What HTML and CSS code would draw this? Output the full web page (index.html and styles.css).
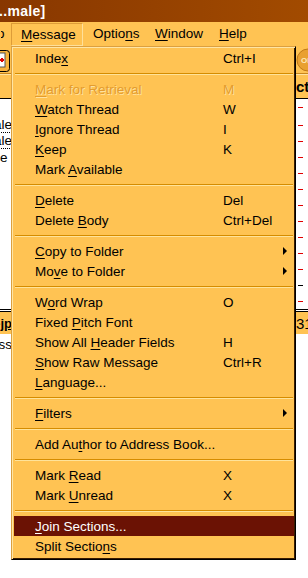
FILE: index.html
```html
<!DOCTYPE html>
<html lang="en">
<head>
    <meta charset="UTF-8">
    <meta name="viewport" content="width=device-width, initial-scale=1.0">
    <title>Message menu</title>
    <link rel="stylesheet" href="styles.css">
</head>
<body>
    <div class="window">
        <div class="titlebar"><span class="title">..male]</span></div>

        <div class="menubar">
            <span class="menu-title cut"><span>o</span></span>
            <span class="menu-title open w-msg"><u>M</u>essage</span>
            <span class="menu-title w-opt">Optio<u>n</u>s</span>
            <span class="menu-title w-win"><u>W</u>indow</span>
            <span class="menu-title"><u>H</u>elp</span>
        </div>

        <div class="toolbar">
            <div class="tool tool-left">
                <svg width="24" height="24" viewBox="0 0 24 24">
                    <rect x="0.5" y="2.5" width="23" height="21" rx="3" fill="#f6b23c" stroke="#000"/>
                    <rect x="3" y="5" width="16" height="14" fill="#fff" stroke="#555"/>
                    <path d="M14 12h4M16 10v4" stroke="#e00000" stroke-width="2"/>
                </svg>
            </div>
            <div class="tool tool-right">
                <svg width="24" height="24" viewBox="0 0 24 24">
                    <circle cx="12" cy="12" r="11" fill="#e9a030" stroke="#c07818"/>
                    <text x="5" y="15" font-family="Liberation Sans, sans-serif" font-size="8" font-weight="bold" fill="#ffe9b8">OP</text>
                </svg>
            </div>
        </div>

        <div class="pane upper">
            <div class="pane-head">
                <span class="head-left"></span>
                <span class="head-right">ct</span>
            </div>
            <div class="rows">
                <div class="row"><span class="cell-left"></span><span class="dash"></span></div>
                <div class="row"><span class="cell-left"><span class="from">Female</span></span><span class="dash"></span></div>
                <div class="row"><span class="cell-left"><span class="from">Female</span></span><span class="dash"></span></div>
                <div class="row"><span class="cell-start">e</span><span class="dash"></span></div>
                <div class="row"><span class="cell-left"></span><span class="dash"></span></div>
                <div class="row"><span class="cell-left"></span><span class="dash"></span></div>
                <div class="row"><span class="cell-left"></span><span class="dash"></span></div>
                <div class="row"><span class="cell-left"></span><span class="dash"></span></div>
                <div class="row"><span class="cell-left"></span><span class="dash"></span></div>
                <div class="row"><span class="cell-left"></span><span class="dash"></span></div>
                <div class="row"><span class="cell-left"></span><span class="dash"></span></div>
                <div class="row"><span class="cell-left"></span><span class="dash black"></span></div>
                <div class="row"><span class="cell-left"></span><span class="dash"></span></div>
            </div>
        </div>

        <div class="pane lower">
            <div class="pane-head low">
                <span class="head-left link"><span>photo-jp</span></span>
                <span class="head-right num">31</span>
            </div>
            <div class="body-text"><span class="cell-left"><span class="plain">Class</span></span></div>
        </div>
    </div>

    <div class="dropdown">
        <div class="item"><span class="label">Inde<u>x</u></span><span class="key">Ctrl+I</span></div>
        <div class="sep"></div>
        <div class="item disabled"><span class="label"><u>M</u>ark for Retrieval</span><span class="key">M</span></div>
        <div class="item"><span class="label"><u>W</u>atch Thread</span><span class="key">W</span></div>
        <div class="item"><span class="label"><u>I</u>gnore Thread</span><span class="key">I</span></div>
        <div class="item"><span class="label"><u>K</u>eep</span><span class="key">K</span></div>
        <div class="item"><span class="label">Mark <u>A</u>vailable</span><span class="key"></span></div>
        <div class="sep"></div>
        <div class="item"><span class="label"><u>D</u>elete</span><span class="key">Del</span></div>
        <div class="item"><span class="label">Delete <u>B</u>ody</span><span class="key">Ctrl+Del</span></div>
        <div class="sep"></div>
        <div class="item"><span class="label"><u>C</u>opy to Folder</span><span class="key"></span><span class="arrow"></span></div>
        <div class="item"><span class="label">Mo<u>v</u>e to Folder</span><span class="key"></span><span class="arrow"></span></div>
        <div class="sep"></div>
        <div class="item"><span class="label">W<u>o</u>rd Wrap</span><span class="key">O</span></div>
        <div class="item"><span class="label">Fixed <u>P</u>itch Font</span><span class="key"></span></div>
        <div class="item"><span class="label">Show All <u>H</u>eader Fields</span><span class="key">H</span></div>
        <div class="item"><span class="label"><u>S</u>how Raw Message</span><span class="key">Ctrl+R</span></div>
        <div class="item"><span class="label"><u>L</u>anguage...</span><span class="key"></span></div>
        <div class="sep"></div>
        <div class="item"><span class="label"><u>F</u>ilters</span><span class="key"></span><span class="arrow"></span></div>
        <div class="sep"></div>
        <div class="item"><span class="label wide">Add Au<u>t</u>hor to Address Book...</span></div>
        <div class="sep"></div>
        <div class="item"><span class="label">Mark <u>R</u>ead</span><span class="key">X</span></div>
        <div class="item"><span class="label">Mark <u>U</u>nread</span><span class="key">X</span></div>
        <div class="sep"></div>
        <div class="item active"><span class="label"><u>J</u>oin Sections...</span><span class="key"></span></div>
        <div class="item"><span class="label">Split Sectio<u>n</u>s</span><span class="key"></span></div>
    </div>
</body>
</html>
```

FILE: styles.css
```css
body {
    margin: 0;
    width: 308px;
    height: 578px;
    overflow: hidden;
    background-color: #fff;
    font-family: "Liberation Sans", Arial, sans-serif;
    font-size: 13.5px;
    color: #000;
}
u {
    text-decoration: underline;
    text-underline-offset: 2px;
    text-decoration-thickness: 1px;
}
.window {
    width: 308px;
}
.titlebar {
    height: 22px;
    background: linear-gradient(to right, #883700, #a24b00);
    display: flex;
    align-items: center;
}
.title {
    color: #fff;
    font-weight: bold;
    font-size: 14px;
    margin-left: -1px;
    letter-spacing: 0.3px;
}
.menubar {
    height: 24px;
    background-color: #ffc353;
    display: flex;
    align-items: stretch;
}
.menu-title {
    box-sizing: border-box;
    padding-left: 9px;
    line-height: 22px;
    border: 1px solid transparent;
    white-space: nowrap;
}
.menu-title.cut {
    width: 11px;
    padding-left: 0;
    overflow: hidden;
}
.menu-title.cut span {
    margin-left: -4px;
}
.menu-title.open {
    border-color: #dd9c38 #ffe09a #ffe09a #dd9c38;
    height: 23px;
    margin-top: 1px;
    line-height: 21px;
}
.w-msg { width: 72px; }
.w-opt { width: 62px; }
.w-win { width: 64px; }

.toolbar {
    height: 27px;
    background-color: #ffc353;
    display: flex;
    justify-content: space-between;
    align-items: center;
    border-bottom: 1px solid #c9861c;
    overflow: hidden;
}
.tool {
    width: 12px;
    height: 24px;
    overflow: hidden;
    display: flex;
}
.tool-left {
    justify-content: flex-end;
    width: 10px;
}
.tool-left svg,
.tool-right svg {
    flex: none;
}

.pane-head {
    height: 25px;
    background-color: #ffc353;
    border-top: 1px solid #ffe3a0;
    border-bottom: 1px solid #000;
    display: flex;
    justify-content: space-between;
    align-items: center;
    box-sizing: border-box;
}
.head-right {
    width: 12px;
    font-weight: bold;
    font-size: 15px;
    overflow: hidden;
    white-space: nowrap;
}
.rows {
    background-color: #fff;
    border-bottom: 3px double #000;
}
.row {
    height: 16px;
    display: flex;
    justify-content: space-between;
    align-items: center;
}
.row:nth-child(2) {
    margin-top: 2px;
}
.cell-left {
    width: 12px;
    display: flex;
    justify-content: flex-end;
    overflow: hidden;
    white-space: nowrap;
}
.cell-start {
    width: 12px;
    overflow: hidden;
}
.from {
    border-bottom: 1px dotted #000;
    line-height: 14px;
}
.dash {
    width: 5px;
    height: 1px;
    margin-right: 5px;
    background-color: #e00000;
}
.dash.black {
    background-color: #000;
}
.pane-head.low {
    height: 22px;
    border-top: none;
    border-bottom: none;
}
.head-left.link {
    width: 12px;
    display: flex;
    justify-content: flex-end;
    overflow: hidden;
    white-space: nowrap;
    font-weight: bold;
    font-size: 13px;
    color: #000;
    text-decoration: underline;
}
.head-right.num {
    font-weight: normal;
    font-size: 15px;
}
.body-text {
    height: 20px;
    display: flex;
    align-items: center;
}

/* dropdown menu */
.dropdown {
    position: absolute;
    left: 11px;
    top: 46px;
    width: 285px;
    height: 514px;
    box-sizing: border-box;
    padding: 1px 1px 0 2px;
    background-color: #ffc353;
    border-left: 1px solid #dca040;
    border-top: 1px solid #dca040;
    border-right: 1px solid #000;
    border-bottom: 1px solid #000;
    box-shadow: inset 1px 1px 0 #ffe5a4, inset -1px -1px 0 #3a1c00;
}
.item {
    height: 20px;
    display: flex;
    align-items: center;
    padding-left: 21px;
    white-space: nowrap;
}
.label {
    flex: 0 0 188px;
}
.label.wide {
    flex: 1;
}
.key {
    flex: 1;
}
.arrow {
    width: 0;
    height: 0;
    margin-right: 7px;
    border-top: 4px solid transparent;
    border-bottom: 4px solid transparent;
    border-left: 4px solid #000;
}
.item.disabled {
    color: #e39c2e;
    text-shadow: 1px 1px 0 #ffe2a0;
}
.item.active {
    background-color: #6b1204;
    color: #fff;
}
.sep {
    height: 11px;
    margin: 0 1px;
    box-sizing: border-box;
    padding-top: 5px;
}
.sep::before {
    content: "";
    display: block;
    height: 1px;
    background-color: #d68c00;
    border-bottom: 1px solid #ffe39a;
}
```
